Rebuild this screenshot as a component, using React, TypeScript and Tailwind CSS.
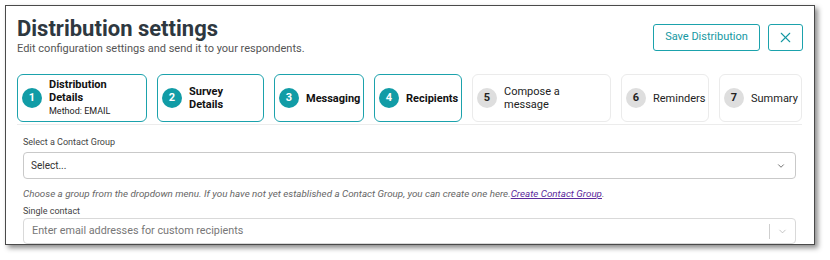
import React from "react";
import { X, ChevronDown } from "lucide-react";

type Step = {
  n: number;
  title: string;
  sub?: string;
  width: string;
  done: boolean;
};

const steps: Step[] = [
  { n: 1, title: "Distribution\nDetails", sub: "Method: EMAIL", width: "w-[130px]", done: true },
  { n: 2, title: "Survey\nDetails", width: "w-[107px]", done: true },
  { n: 3, title: "Messaging", width: "w-[90px]", done: true },
  { n: 4, title: "Recipients", width: "w-[88px]", done: true },
  { n: 5, title: "Compose a\nmessage", width: "w-[139px]", done: false },
  { n: 6, title: "Reminders", width: "w-[88px]", done: false },
  { n: 7, title: "Summary", width: "w-[83px]", done: false },
];

const StepCard: React.FC<{ step: Step }> = ({ step }) => (
  <div
    className={`${step.width} shrink-0 h-[48px] rounded-[6px] border flex items-center pl-[4px] pr-[3px] gap-[7px] ${
      step.done ? "border-[#1ba2ac]" : "border-[#ebebeb]"
    }`}
  >
    <div
      className={`w-[20px] h-[20px] rounded-full shrink-0 flex items-center justify-center text-[11px] font-bold ${
        step.done ? "bg-[#119ca6] text-white" : "bg-[#dedede] text-[#222]"
      }`}
    >
      {step.n}
    </div>
    <div className="min-w-0">
      <div
        className={`whitespace-pre-line text-[11px] leading-[13px] ${
          step.done ? "font-bold text-[#111]" : "font-normal text-[#222]"
        }`}
      >
        {step.title}
      </div>
      {step.sub && <div className="text-[9px] leading-[13px] mt-[1px] text-[#222]">{step.sub}</div>}
    </div>
  </div>
);

export default function App() {
  return (
    <div className="w-[830px] h-[260px] bg-white font-['Roboto',sans-serif] pt-[5px] pl-[5px]">
      <div className="w-[810px] h-[240px] border border-[#4a4a4a] bg-white shadow-[3px_3px_5px_rgba(0,0,0,0.45)] overflow-hidden pl-[11px] pr-[12px]">
        <div className="flex justify-between items-start">
          <div className="pt-[10px]">
            <h1 className="text-[22px] leading-[26px] font-bold text-[#2e3840]">Distribution settings</h1>
            <p className="text-[11px] leading-[13px] text-[#555]">
              Edit configuration settings and send it to your respondents.
            </p>
          </div>
          <div className="flex gap-[8px] mt-[18px] mr-[-1px]">
            <button className="h-[27px] w-[107px] border-[1.5px] border-[#1ba2ac] rounded-[3px] text-[11px] text-[#1598a2]">
              Save Distribution
            </button>
            <button className="h-[27px] w-[35px] border-[1.5px] border-[#1ba2ac] rounded-[3px] flex items-center justify-center text-[#1598a2]">
              <X size={17} strokeWidth={1.5} />
            </button>
          </div>
        </div>

        <div className="mt-[19px] flex gap-[10px] pb-[2px] border-b border-[#ececec]">
          {steps.map((s) => (
            <StepCard key={s.n} step={s} />
          ))}
        </div>

        <div className="px-[6px] pt-[11px]">
          <label className="block text-[9px] leading-[12px] text-[#444]">Select a Contact Group</label>
          <div className="mt-[4px] h-[27px] border border-[#c9c9c9] rounded-[4px] flex items-center justify-between pl-[7px] pr-[9px]">
            <span className="text-[10px] text-[#333]">Select...</span>
            <ChevronDown size={10} strokeWidth={2} className="text-[#555]" />
          </div>
          <p className="mt-[8px] text-[9.8px] leading-[13px] italic text-[#666]">
            Choose a group from the dropdown menu. If you have not yet established a Contact Group, you can create one here.
            <a href="#" className="text-[#5c2a9d] underline">Create Contact Group</a>.
          </p>
          <label className="block mt-[5px] text-[9px] leading-[12px] text-[#444]">Single contact</label>
          <div className="mt-[1px] h-[26px] border border-[#d9d9d9] rounded-[4px] flex items-center pl-[8px]">
            <span className="flex-1 text-[10.8px] text-[#777]">Enter email addresses for custom recipients</span>
            <div className="w-px h-[15px] bg-[#cfcfcf]" />
            <div className="w-[25px] flex justify-center">
              <ChevronDown size={11} strokeWidth={1.5} className="text-[#aaa]" />
            </div>
          </div>
        </div>
      </div>
    </div>
  );
}
